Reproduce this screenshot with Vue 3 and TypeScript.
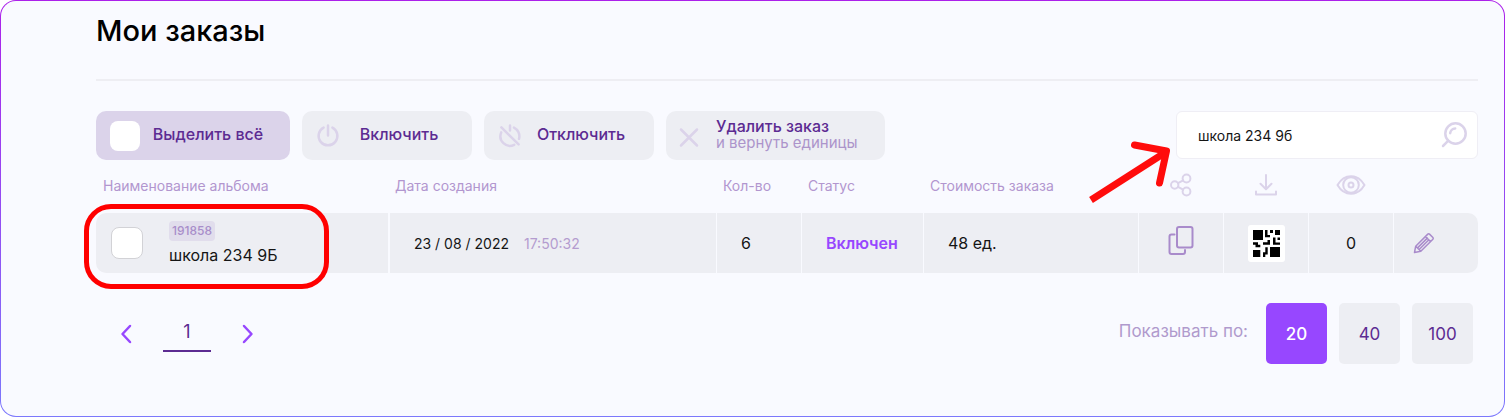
<script setup lang="ts">
import { ref } from 'vue'

interface Order {
  id: string
  name: string
  date: string
  time: string
  count: number
  status: string
  price: string
  views: number
}

const orders: Order[] = [
  {
    id: '191858',
    name: 'школа 234 9Б',
    date: '23 / 08 / 2022',
    time: '17:50:32',
    count: 6,
    status: 'Включен',
    price: '48 ед.',
    views: 0,
  },
]

const query = ref('школа 234 9б')
const allSelected = ref(false)
const selected = ref<string[]>([])
const pageSizes = [20, 40, 100]
const pageSize = ref(20)

function toggleAll() {
  selected.value = allSelected.value ? orders.map((o) => o.id) : []
}
</script>

<template>
  <div class="frame">
    <main class="page">
      <h1>Мои заказы</h1>

      <div class="toolbar">
        <label class="action select-all">
          <input v-model="allSelected" type="checkbox" class="check" @change="toggleAll" />
          <span class="action-title">Выделить всё</span>
        </label>
        <button type="button" class="action">
          <svg class="action-icon" width="24" height="24" viewBox="0 0 24 24" aria-hidden="true">
            <path d="M12 1.500V11.500M7.600 3.600a9.400 9.400 0 1 0 8.800 0" />
          </svg>
          <span class="action-title">Включить</span>
        </button>
        <button type="button" class="action">
          <svg class="action-icon" width="24" height="24" viewBox="0 0 24 24" aria-hidden="true">
            <path d="M12 1.500V6.500M3.400 3.400 20.600 20.400M16 3.600a9.600 9.600 0 0 1 5 11.200M3.200 8.400a9.600 9.600 0 0 0 13 12.400" />
          </svg>
          <span class="action-title">Отключить</span>
        </button>
        <button type="button" class="action delete">
          <svg class="action-icon" width="24" height="24" viewBox="0 0 24 24" aria-hidden="true">
            <path d="M4 5.500 20 21.500M20 5.500 4 21.500" />
          </svg>
          <span class="action-text">
            <span class="action-title">Удалить заказ</span>
            <span class="action-note">и вернуть единицы</span>
          </span>
        </button>

        <form class="search" @submit.prevent>
          <input v-model="query" type="text" aria-label="Поиск заказа" />
          <button type="submit" aria-label="Найти">
            <svg width="26" height="26" viewBox="0 0 26 26" aria-hidden="true">
              <circle cx="14.500" cy="11.500" r="10.200" />
              <path d="M7.300 18.700 2 24" />
              <path d="M9.200 11.200a5.200 5.200 0 0 1 5-4.800" />
            </svg>
          </button>
          <svg class="arrow" width="90" height="70" viewBox="0 0 90 70" aria-hidden="true">
            <path d="M4 66 79 18" />
            <path class="head" d="M47.500 11 79.500 17 72.500 49" />
          </svg>
        </form>
      </div>

      <table>
        <colgroup>
          <col class="c-name" />
          <col />
          <col class="c-icon" />
          <col class="c-status" />
          <col class="c-price" />
          <col class="c-icon" />
          <col class="c-icon" />
          <col class="c-icon" />
          <col class="c-icon" />
        </colgroup>
        <thead>
          <tr>
            <th>Наименование альбома</th>
            <th>Дата создания</th>
            <th>Кол-во</th>
            <th>Статус</th>
            <th>Стоимость заказа</th>
            <th class="center" aria-label="Поделиться">
              <svg width="22" height="24" viewBox="0 0 22 24" aria-hidden="true">
                <circle cx="4.700" cy="12" r="3.700" />
                <circle cx="16.500" cy="5.500" r="3.900" />
                <circle cx="16.500" cy="18.500" r="3.900" />
                <path d="m8 10.200 5.200-2.900M8 13.800l5.200 2.900" />
              </svg>
            </th>
            <th class="center" aria-label="Скачать">
              <svg width="24" height="24" viewBox="0 0 24 24" aria-hidden="true">
                <path d="M12 2v14M6.500 10.800 12 16.300l5.500-5.500M2 18.500v3h20v-3" />
              </svg>
            </th>
            <th class="center" aria-label="Просмотры">
              <svg width="30" height="24" viewBox="0 0 30 24" aria-hidden="true">
                <path d="M1.500 12C5 6 9.500 3.200 15 3.200S25 6 28.500 12C25 18 20.500 20.800 15 20.800S5 18 1.500 12Z" />
                <circle cx="15" cy="12" r="7.800" />
                <circle cx="15" cy="12" r="2.500" />
              </svg>
            </th>
            <th aria-label="Редактировать"></th>
          </tr>
        </thead>
        <tbody>
          <tr v-for="order in orders" :key="order.id">
            <td class="name-cell">
              <label class="album">
                <input v-model="selected" :value="order.id" type="checkbox" class="check outlined" />
                <span class="album-text">
                  <span class="badge">{{ order.id }}</span>
                  <span class="album-name">{{ order.name }}</span>
                </span>
              </label>
              <span class="highlight"></span>
            </td>
            <td class="date">
              {{ order.date }}<span class="time">{{ order.time }}</span>
            </td>
            <td>{{ order.count }}</td>
            <td class="status">{{ order.status }}</td>
            <td>{{ order.price }}</td>
            <td class="center">
              <button type="button" class="icon-btn copy" aria-label="Копировать">
                <svg width="26" height="30" viewBox="0 0 26 30" aria-hidden="true">
                  <rect x="9" y="1" width="15.500" height="20.500" rx="2" />
                  <path d="M6.500 8.500H3.500a2 2 0 0 0-2 2V26a2 2 0 0 0 2 2h11.500a2 2 0 0 0 2-2v-2" />
                </svg>
              </button>
            </td>
            <td class="center">
              <button type="button" class="icon-btn qr" aria-label="QR-код">
                <svg width="27" height="27" viewBox="0 0 27 27" aria-hidden="true">
                  <path
                    d="M0 0h10v10H0zM12 0h2.500v5H17v2.300h-5zM17 0h3v3h-3zM22 0h5v5h-5zM20 7.500h2.500v5H27v2.300h-7zM24.500 7.500H27V10h-2.500zM14.500 10H17v4.800h-7v-2.500h4.500zM0 12.300h5v2.500h2.300v2.400h-4.800v-2.400H0zM0 20h7.300v7H0zM12.300 17.200h2.400v7.400h-2.400V27H10v-4.800h2.300zM17 17h10v10H17z"
                  />
                </svg>
              </button>
            </td>
            <td class="center">{{ order.views }}</td>
            <td class="edit">
              <button type="button" class="icon-btn pencil" aria-label="Редактировать">
                <svg width="22" height="22" viewBox="0 0 22 22" aria-hidden="true">
                  <path d="m1.500 20.500 1.200-6.300L14.800 2.100a1.200 1.200 0 0 1 1.700 0l3.400 3.400a1.200 1.200 0 0 1 0 1.700L7.800 19.300ZM12.400 4.500l5.100 5.100M2.700 14.200l5.100 5.100M4.800 15.600 14.300 6.100M6.400 17.200 15.900 7.700" />
                </svg>
              </button>
            </td>
          </tr>
        </tbody>
      </table>

      <footer>
        <nav class="pager" aria-label="Страницы">
          <button type="button" aria-label="Назад">
            <svg width="12" height="20" viewBox="0 0 12 20" aria-hidden="true"><path d="M10 2 2.500 10l7.500 8" /></svg>
          </button>
          <a href="#" aria-current="page">1</a>
          <button type="button" aria-label="Вперёд">
            <svg width="12" height="20" viewBox="0 0 12 20" aria-hidden="true"><path d="m2 2 7.500 8L2 18" /></svg>
          </button>
        </nav>
        <div class="sizes">
          <span class="sizes-label">Показывать по:</span>
          <button
            v-for="size in pageSizes"
            :key="size"
            type="button"
            :class="{ active: size === pageSize }"
            @click="pageSize = size"
          >
            {{ size }}
          </button>
        </div>
      </footer>
    </main>
  </div>
</template>

<style>
body {
  background: #fff;
}
</style>

<style scoped>
* {
  box-sizing: border-box;
}

.frame {
  min-height: 100vh;
  display: flex;
  padding: 1px;
  border-radius: 16px;
  background: linear-gradient(#ac20ea, #7c78fc);
  font-family: Inter, "Open Sans", sans-serif;
  color: #151515;
}

.page {
  flex: 1;
  min-width: 0;
  padding: 13px 26px 50px 95px;
  border-radius: 15px;
  background: #f9faff;
}

button,
input {
  margin: 0;
  font: inherit;
  color: inherit;
}

button {
  padding: 0;
  border: 0;
  background: none;
  cursor: pointer;
}

svg {
  display: block;
  flex: none;
  fill: none;
  stroke: #dbd3ea;
  stroke-width: 2;
  stroke-linecap: round;
  stroke-linejoin: round;
}

h1 {
  margin: 0;
  padding-bottom: 31px;
  border-bottom: 2px solid #eeeef3;
  font-size: 29px;
  font-weight: 500;
  line-height: 34px;
  color: #000;
}

.toolbar {
  display: flex;
  gap: 12px;
  margin-top: 30px;
}

.action {
  display: flex;
  align-items: center;
  width: 170px;
  height: 49px;
  padding: 0 14px;
  border-radius: 10px;
  background: #edeef3;
  text-align: left;
}

.action .action-title {
  font-size: 16px;
  font-weight: 500;
  line-height: 17px;
  color: #5c2b92;
  white-space: nowrap;
}

.action > .action-title {
  flex: 1;
  padding-bottom: 3px;
  text-align: center;
}

.select-all {
  width: 194px;
  background: #dbd3ea;
}

.delete {
  width: 219px;
  padding: 0 11px;
  gap: 15px;
}

.action-icon {
  stroke-width: 2.5;
}

.action-text {
  display: flex;
  flex-direction: column;
  padding-bottom: 3px;
}

.action-note {
  font-size: 15px;
  line-height: 16px;
  color: #ac94cb;
  white-space: nowrap;
}

.check {
  appearance: none;
  flex: none;
  width: 30px;
  height: 30px;
  border-radius: 8px;
  background: #fff;
}

.check.outlined {
  width: 32px;
  height: 32px;
  border: 1px solid #d2d2d6;
}

.check:checked {
  background: #9747ff;
}

.search {
  position: relative;
  display: flex;
  align-items: center;
  width: 302px;
  height: 48px;
  margin-left: auto;
  padding: 0 10px 0 21px;
  border: 1px solid #efeef5;
  border-radius: 6px;
  background: #fff;
}

.search input {
  flex: 1;
  min-width: 0;
  padding: 0;
  border: 0;
  outline: 0;
  background: none;
  font-size: 14px;
}

.search button svg {
  stroke-width: 2.5;
}

.arrow {
  position: absolute;
  top: 22px;
  right: 300px;
  stroke: #ff0c0c;
  stroke-width: 7;
  stroke-linecap: butt;
}

.arrow .head {
  stroke-linecap: round;
}

table {
  width: 100%;
  table-layout: fixed;
  border-collapse: separate;
  border-spacing: 0;
}

.c-name {
  width: 292px;
}

.c-icon {
  width: 85px;
}

.c-status {
  width: 122px;
}

.c-price {
  width: 215px;
}

th {
  height: 53px;
  padding: 0 0 2px 7px;
  font-size: 14px;
  font-weight: 400;
  text-align: left;
  white-space: nowrap;
  color: #b296cf;
}

td {
  height: 60px;
  padding: 0 0 0 24px;
  border-left: 1px solid #f9faff;
  background: #edeef3;
  font-size: 16px;
  white-space: nowrap;
}

th.center {
  padding: 0 0 4px;
  text-align: center;
}

td.center {
  padding: 0;
  text-align: center;
}

th svg,
td button svg {
  margin: 0 auto;
}

td:first-child {
  border-left: 0;
  border-radius: 10px 0 0 10px;
}

td:last-child {
  border-radius: 0 10px 10px 0;
}

.name-cell {
  position: relative;
  padding-left: 15px;
}

.album {
  display: flex;
  align-items: center;
  gap: 26px;
}

.album-text {
  display: flex;
  flex-direction: column;
  align-items: flex-start;
  gap: 4px;
}

.badge {
  padding: 0 3px;
  border-radius: 4px;
  background: #e1ddec;
  font-size: 12px;
  font-weight: 500;
  line-height: 20px;
  color: #a88dca;
}

.album-name {
  line-height: 20px;
}

.highlight {
  position: absolute;
  inset: -9px 59px -16px -12px;
  border: 5px solid #f00;
  border-radius: 27px;
  pointer-events: none;
}

td.date {
  border-left-width: 2px;
  font-size: 14px;
}

.time {
  margin-left: 15px;
  color: #b49ccf;
}

td.status {
  font-weight: 600;
  color: #9747ff;
}

.icon-btn {
  display: inline-block;
  vertical-align: middle;
}

.copy {
  padding-bottom: 5px;
}

.copy svg {
  stroke: #a98bcb;
}

.pencil svg {
  stroke: #a98bcb;
  stroke-width: 1.5;
}

.qr {
  padding: 5px;
  border-radius: 3px;
  background: #fff;
}

.qr svg {
  fill: #000;
  stroke: none;
}

td.edit {
  padding-left: 19px;
}

footer {
  display: flex;
  justify-content: space-between;
  align-items: center;
  margin-top: 30px;
  padding: 0 5px 0 24px;
}

.pager {
  display: flex;
  align-items: center;
  gap: 31px;
}

.pager svg {
  stroke: #9747ff;
  stroke-width: 2.5;
}

.pager a {
  width: 48px;
  height: 37px;
  border-bottom: 2px solid #5c2b92;
  font-size: 18px;
  line-height: 34px;
  text-align: center;
  text-decoration: none;
  color: #5c2b92;
}

.sizes {
  display: flex;
  align-items: center;
  gap: 12px;
}

.sizes-label {
  margin-right: 6px;
  padding-bottom: 6px;
  font-size: 17px;
  color: #b09acd;
}

.sizes button {
  width: 61px;
  height: 61px;
  border-radius: 5px;
  background: #edeef3;
  font-size: 17px;
  color: #5c2b92;
}

.sizes button.active {
  background: #9747ff;
  font-weight: 500;
  color: #fff;
}
</style>
